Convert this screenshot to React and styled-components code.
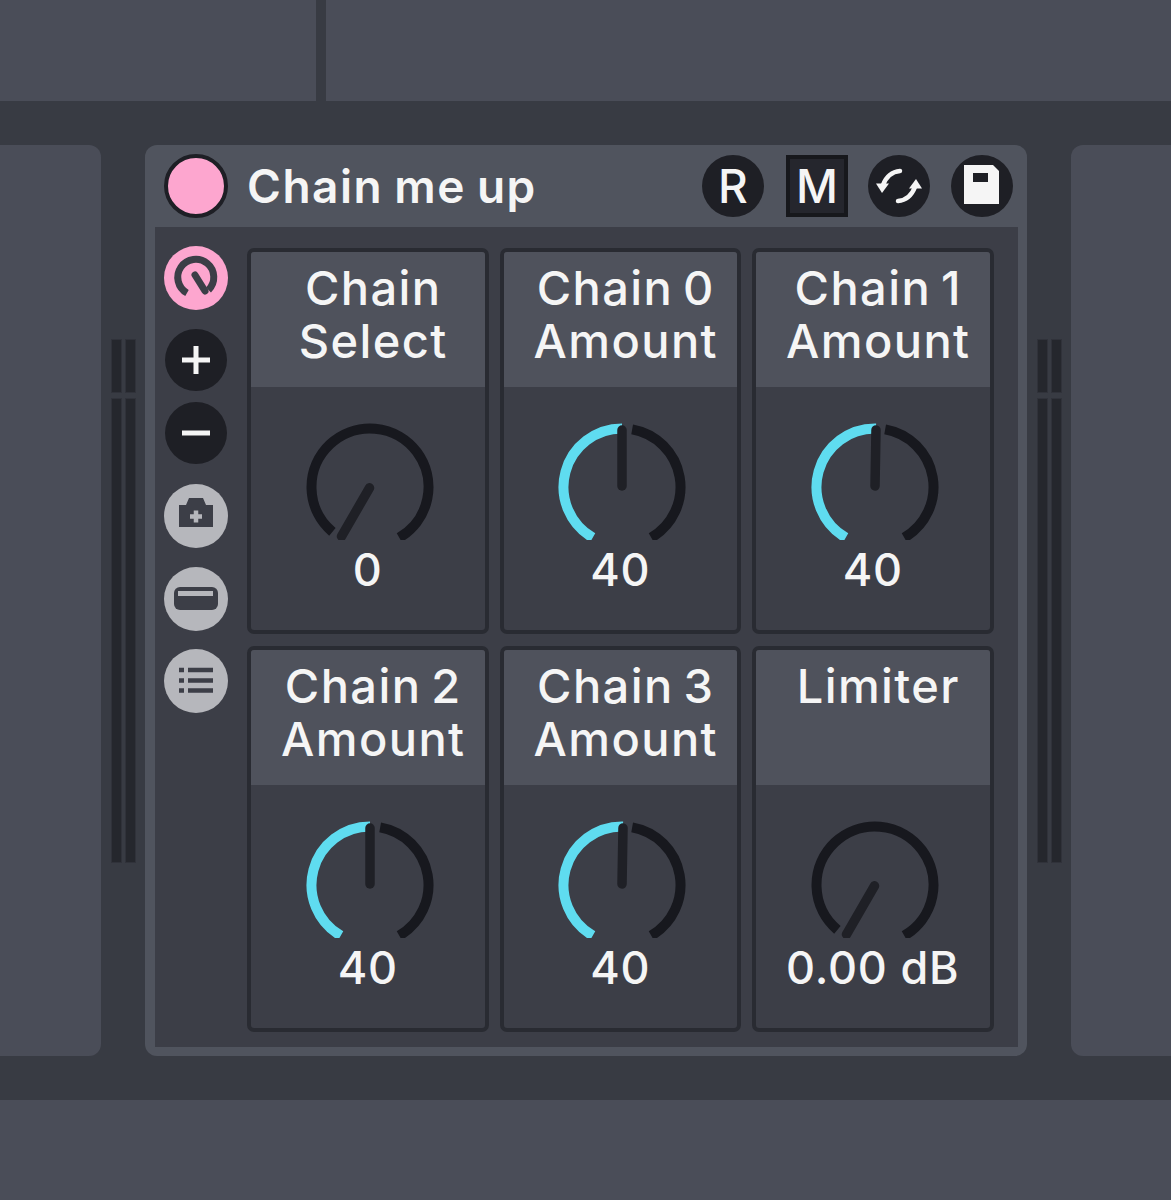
import React from 'react';
import styled, { createGlobalStyle } from 'styled-components';

const GlobalStyle = createGlobalStyle`
  html, body {
    margin: 0;
    padding: 0;
    background: #383b43;
  }
  * {
    box-sizing: border-box;
  }
`;

const Page = styled.div`
  width: 1171px;
  height: 1200px;
  display: flex;
  flex-direction: column;
  overflow: hidden;
  background: #383b43;
  font-family: Inter, "Noto Sans", sans-serif;
  color: #f5f5f5;
`;

const TopTrack = styled.div`
  height: 101px;
  display: flex;
  flex: none;
  margin-top: ${props => props.$offset || 0}px;
`;

const TopClip = styled.div`
  flex: ${props => props.$grow ? 1 : 'none'};
  width: ${props => props.$grow ? 'auto' : '316px'};
  margin-left: ${props => props.$shift || 0}px;
  background: #4a4d58;
`;

const Rack = styled.div`
  height: 911px;
  margin-top: 44px;
  display: flex;
  flex: none;
`;

const SidePanel = styled.div`
  width: ${props => props.$width}px;
  flex: none;
  background: #4a4d58;
  border-radius: ${props => props.$right ? '12px 0 0 12px' : '0 12px 12px 0'};
`;

const Gutter = styled.div`
  width: 44px;
  flex: none;
  display: flex;
  flex-direction: column;
  justify-content: center;
  align-items: center;
  gap: 5px;
`;

const MeterPair = styled.div`
  display: flex;
  gap: 3px;
  height: ${props => props.$height}px;
`;

const MeterBar = styled.div`
  width: 11px;
  background: #25272d;
  border: 1px solid #30323a;
`;

const Device = styled.div`
  width: 882px;
  flex: none;
  display: flex;
  flex-direction: column;
  background: #50545e;
  border-radius: 12px;
  padding: 0 9px 9px 10px;
`;

const DeviceHeader = styled.div`
  height: 82px;
  flex: none;
  display: flex;
  align-items: center;
  padding-left: 9px;
`;

const PowerLed = styled.div`
  width: 64px;
  height: 64px;
  border-radius: 50%;
  background: #fda6cf;
  border: 4px solid #1e1f25;
  flex: none;
`;

const DeviceTitle = styled.div`
  margin-left: 19px;
  flex: 1;
  font-size: 46px;
  font-weight: 600;
  letter-spacing: 1.5px;
  word-spacing: -2px;
  white-space: nowrap;
`;

const HeaderActions = styled.div`
  display: flex;
  gap: 21px;
  margin-right: 5px;
`;

const RoundButton = styled.div`
  width: 62px;
  height: 62px;
  flex: none;
  display: flex;
  align-items: center;
  justify-content: center;
  font-size: 46px;
  font-weight: 500;
  background: #1e1f25;
  border-radius: 50%;
`;

const SquareButton = styled(RoundButton)`
  border-radius: 0;
  border: 4px solid #17181c;
  background: #25262d;
  position: relative;
  left: 1px;
`;

const DeviceBody = styled.div`
  flex: 1;
  display: flex;
  background: #3c3e47;
  padding: 19px 25px 15px 0;
`;

const SideColumn = styled.div`
  width: 82px;
  margin-right: 10px;
  flex: none;
  display: flex;
  flex-direction: column;
  align-items: center;
`;

const SideSlot = styled.div`
  width: 64px;
  height: 64px;
  flex: none;
  margin-top: ${props => props.$gap}px;
  display: flex;
  align-items: center;
  justify-content: center;
`;

const CardGrid = styled.div`
  display: grid;
  grid-template-columns: repeat(3, 241.5px);
  grid-template-rows: repeat(2, 386px);
  column-gap: 11px;
  row-gap: 12px;
  margin-top: 2px;
`;

const Card = styled.div`
  display: flex;
  flex-direction: column;
  align-items: center;
  background: #3c3e47;
  border: 4px solid #292b32;
  border-radius: 7px;
  overflow: hidden;
`;

const CardTitle = styled.div`
  width: 100%;
  height: 135px;
  flex: none;
  background: #4f525c;
  padding: 9px 0 0 11px;
  font-size: 47px;
  font-weight: 500;
  letter-spacing: 1.4px;
  word-spacing: -4px;
  line-height: 53px;
  text-align: center;
  white-space: pre-line;
`;

const KnobSvg = styled.svg`
  display: block;
  flex: none;
  margin: 35px 0 0 4px;
`;

const KnobValue = styled.div`
  margin-top: 3px;
  font-size: 45px;
  font-weight: 500;
  letter-spacing: 0.8px;
  line-height: 53px;
  text-align: center;
`;

const polar = (angle, radius) => {
  const rad = ((angle - 90) * Math.PI) / 180;
  return [65 + radius * Math.cos(rad), 65 + radius * Math.sin(rad)];
};

const arc = (from, to, radius) => {
  const [x1, y1] = polar(from, radius);
  const [x2, y2] = polar(to, radius);
  const large = to - from > 180 ? 1 : 0;
  return `M${x1} ${y1}A${radius} ${radius} 0 ${large} 1 ${x2} ${y2}`;
};

const Knob = ({ angle, active }) => {
  const [nx, ny] = polar(angle, 57);
  const [bx, by] = polar(angle, 1);
  return (
    <KnobSvg width="130" height="118" viewBox="0 0 130 118">
      {active ? (
        <>
          <path d={arc(10, 150, 58.5)} fill="none" stroke="#17181e" strokeWidth="10" />
          <path d={arc(-150, angle, 58.5)} fill="none" stroke="#5fdcf0" strokeWidth="10" />
        </>
      ) : (
        <path d={arc(-140, 150, 58.5)} fill="none" stroke="#17181e" strokeWidth="10" />
      )}
      <line x1={nx} y1={ny} x2={bx} y2={by} stroke="#1f2026" strokeWidth="9.500" strokeLinecap="round" />
    </KnobSvg>
  );
};

const ChainIcon = () => (
  <svg width="64" height="64" viewBox="0 0 64 64">
    <circle cx="32" cy="32" r="32" fill="#fda6cf" />
    <path d="M23 47A18 18 0 1 1 44.500 44" fill="none" stroke="#3c3e47" strokeWidth="7" />
    <line x1="31" y1="29" x2="41" y2="45" stroke="#3c3e47" strokeWidth="7" strokeLinecap="round" />
  </svg>
);

const PlusIcon = () => (
  <svg width="62" height="62" viewBox="0 0 62 62">
    <path d="M31 17V45M17 31H45" stroke="#f5f5f5" strokeWidth="5" />
  </svg>
);

const MinusIcon = () => (
  <svg width="62" height="62" viewBox="0 0 62 62">
    <path d="M17 31H45" stroke="#f5f5f5" strokeWidth="5" />
  </svg>
);

const RefreshIcon = () => (
  <svg width="54" height="54" viewBox="4 4 54 54">
    <path d="M32 16Q20 17 15 30" fill="none" stroke="#f5f5f5" strokeWidth="4.500" strokeLinecap="round" />
    <path d="M14 38L8 28.500L21 28.500Z" fill="#f5f5f5" />
    <path d="M30 46Q42 45 47 32" fill="none" stroke="#f5f5f5" strokeWidth="4.500" strokeLinecap="round" />
    <path d="M48 24L54 33.500L41 33.500Z" fill="#f5f5f5" />
  </svg>
);

const SaveIcon = () => (
  <svg width="54" height="54" viewBox="4 4 54 54">
    <path d="M13 10H42L48 16V49H13Z" fill="#f5f5f5" />
    <rect x="22" y="18" width="15" height="9" fill="#1e1f25" />
  </svg>
);

const GreyCircle = ({ children }) => (
  <svg width="64" height="64" viewBox="0 0 64 64">
    <circle cx="32" cy="32" r="32" fill="#b6b7bc" />
    {children}
  </svg>
);

const PresetIcon = () => (
  <GreyCircle>
    <path d="M15 21H22L25 14H39L42 21H49V43H15Z" fill="#3c3e47" />
    <path d="M32 26.500V38.500M26 32.500H38" stroke="#b6b7bc" strokeWidth="4.500" />
  </GreyCircle>
);

const BarIcon = () => (
  <GreyCircle>
    <rect x="10" y="20" width="44" height="23" rx="6" fill="#3c3e47" />
    <rect x="14" y="24" width="35" height="5" fill="#b6b7bc" />
  </GreyCircle>
);

const ListIcon = () => (
  <GreyCircle>
    <path d="M24 21H49M24 31.500H49M24 41.500H49" stroke="#3c3e47" strokeWidth="4.500" />
    <path d="M15 21H20M15 31.500H20M15 41.500H20" stroke="#3c3e47" strokeWidth="4.500" />
  </GreyCircle>
);

const knobs = [
  { title: 'Chain\nSelect', value: '0', angle: -150, active: false },
  { title: 'Chain 0\nAmount', value: '40', angle: 0, active: true },
  { title: 'Chain 1\nAmount', value: '40', angle: 1, active: true },
  { title: 'Chain 2\nAmount', value: '40', angle: 0, active: true },
  { title: 'Chain 3\nAmount', value: '40', angle: 1, active: true },
  { title: 'Limiter', value: '0.00 dB', angle: -150, active: false },
];

const Meter = () => (
  <Gutter>
    <MeterPair $height={54}>
      <MeterBar />
      <MeterBar />
    </MeterPair>
    <MeterPair $height={465}>
      <MeterBar />
      <MeterBar />
    </MeterPair>
  </Gutter>
);

const App = () => (
  <Page>
    <GlobalStyle />
    <TopTrack>
      <TopClip />
      <TopClip $grow $shift={10} />
    </TopTrack>
    <Rack>
      <SidePanel $width={101} />
      <Meter />
      <Device>
        <DeviceHeader>
          <PowerLed />
          <DeviceTitle>Chain me up</DeviceTitle>
          <HeaderActions>
            <RoundButton>R</RoundButton>
            <SquareButton>M</SquareButton>
            <RoundButton><RefreshIcon /></RoundButton>
            <RoundButton><SaveIcon /></RoundButton>
          </HeaderActions>
        </DeviceHeader>
        <DeviceBody>
          <SideColumn>
            <SideSlot $gap={0}><ChainIcon /></SideSlot>
            <SideSlot $gap={18}><RoundButton><PlusIcon /></RoundButton></SideSlot>
            <SideSlot $gap={9}><RoundButton><MinusIcon /></RoundButton></SideSlot>
            <SideSlot $gap={19}><PresetIcon /></SideSlot>
            <SideSlot $gap={19}><BarIcon /></SideSlot>
            <SideSlot $gap={18}><ListIcon /></SideSlot>
          </SideColumn>
          <CardGrid>
            {knobs.map(knob => (
              <Card key={knob.title}>
                <CardTitle>{knob.title}</CardTitle>
                <Knob angle={knob.angle} active={knob.active} />
                <KnobValue>{knob.value}</KnobValue>
              </Card>
            ))}
          </CardGrid>
        </DeviceBody>
      </Device>
      <Meter />
      <SidePanel $width={100} $right />
    </Rack>
    <TopTrack $offset={44}>
      <TopClip $grow />
    </TopTrack>
  </Page>
);

export default App;
